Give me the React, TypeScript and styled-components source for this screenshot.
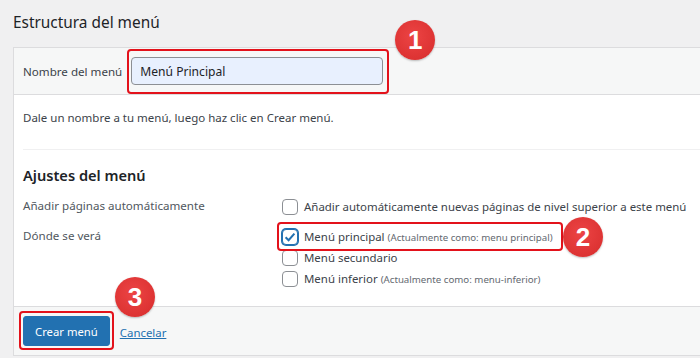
import React from 'react';
import styled, { createGlobalStyle } from 'styled-components';

const GlobalStyle = createGlobalStyle`
	html, body {
		margin: 0;
		padding: 0;
		background: #f0f0f1;
		overflow: hidden;
	}
	body {
		font-family: "Noto Sans", "Open Sans", sans-serif;
		font-size: 11.6px;
		color: #3c434a;
	}
`;

const Page = styled.div`
	width: 700px;
	height: 358px;
	padding-left: 13px;
	box-sizing: border-box;
	overflow: hidden;
`;

const Title = styled.h2`
	margin: 0 0 12px;
	padding-top: 11px;
	font-size: 15.4px;
	line-height: 24px;
	font-weight: 400;
	color: #1d2327;
`;

const Panel = styled.div`
	background: #fff;
	border: 1px solid #dcdcde;
	border-right: none;
`;

const Header = styled.div`
	display: flex;
	align-items: center;
	gap: 9px;
	height: 46px;
	padding-left: 9px;
	background: #f6f7f7;
	border-bottom: 1px solid #dcdcde;
`;

const Label = styled.span`
	font-size: 11.6px;
	color: #3c434a;
`;

const Marked = styled.div`
	position: relative;
	display: inline-flex;
`;

const Highlight = styled.span<{ $t: number; $r: number; $b: number; $l: number }>`
	position: absolute;
	top: ${(p) => p.$t}px;
	right: ${(p) => p.$r}px;
	bottom: ${(p) => p.$b}px;
	left: ${(p) => p.$l}px;
	border: 2.5px solid #e3121b;
	border-radius: 4px;
	pointer-events: none;
`;

const Badge = styled.span<{ $x: number; $y: number }>`
	position: absolute;
	left: ${(p) => p.$x}px;
	top: ${(p) => p.$y}px;
	width: 40px;
	height: 40px;
	border-radius: 50%;
	background: radial-gradient(circle at 45% 40%, #ec4444 0%, #dd3333 70%, #c92b2b 100%);
	box-shadow: 0 1px 2px rgba(0, 0, 0, 0.25);
	color: #fff;
	font-family: "Liberation Sans", Arial, sans-serif;
	font-weight: 700;
	font-size: 26px;
	line-height: 40px;
	text-align: center;
	z-index: 2;
`;

const NameInput = styled.input`
	width: 252px;
	height: 28px;
	box-sizing: border-box;
	padding: 0 8px;
	border: 1px solid #8c8f94;
	border-radius: 4px;
	background: #e8f0fe;
	font-family: inherit;
	font-size: 12.1px;
	color: #1d2327;
	outline: none;
`;

const Body = styled.div`
	padding-left: 9px;
`;

const Hint = styled.p`
	margin: 0;
	padding-top: 13px;
	font-size: 11.5px;
	line-height: 20px;
	color: #3c434a;
`;

const Divider = styled.div`
	height: 1px;
	margin-top: 21px;
	background: #f0f0f1;
`;

const SectionTitle = styled.h3`
	margin: 13px 0 9px;
	font-size: 14.6px;
	line-height: 24px;
	font-weight: 600;
	color: #1d2327;
`;

const SettingsGrid = styled.div`
	display: grid;
	grid-template-columns: 259px 1fr;
	row-gap: 9px;
	padding-bottom: 17px;
`;

const SettingLabel = styled.div`
	font-size: 11.6px;
	line-height: 20px;
	color: #50575e;
`;

const Options = styled.div`
	display: flex;
	flex-direction: column;
	align-items: flex-start;
`;

const Option = styled.label`
	display: inline-flex;
	align-items: center;
	gap: 6px;
	height: 21px;
	font-size: 11.45px;
	color: #3c434a;
	white-space: nowrap;
`;

const Box = styled.span<{ $checked?: boolean }>`
	display: inline-flex;
	align-items: center;
	justify-content: center;
	width: 16px;
	height: 16px;
	box-sizing: border-box;
	border: 1px solid ${(p) => (p.$checked ? '#2271b1' : '#8c8f94')};
	border-radius: 4px;
	background: #fff;
	box-shadow: ${(p) => (p.$checked ? '0 0 0 1px #2271b1' : 'none')};
	flex-shrink: 0;
`;

const Note = styled.span`
	font-size: 9.7px;
	color: #646970;
`;

const Footer = styled.div`
	display: flex;
	align-items: center;
	gap: 10px;
	padding: 9px 0 9px 9px;
	background: #f6f7f7;
	border-top: 1px solid #dcdcde;
`;

const PrimaryButton = styled.button`
	height: 30px;
	padding: 0 11px;
	border: 1px solid #2271b1;
	border-radius: 3px;
	background: #2271b1;
	color: #fff;
	font-family: inherit;
	font-size: 11.3px;
	cursor: pointer;
`;

const CancelLink = styled.a`
	font-size: 11.4px;
	color: #2271b1;
	text-decoration: underline;
	margin-top: 2px;
`;

const Check = ({ checked }: { checked?: boolean }) => (
	<Box $checked={checked}>
		{checked && (
			<svg width="14" height="14" viewBox="0 0 14 14">
				<path d="M2.6 7.2 L5.6 10.2 L11.4 3.6" fill="none" stroke="#2271b1" strokeWidth="2" />
			</svg>
		)}
	</Box>
);

const App = () => {
	return (
		<Page>
			<GlobalStyle />
			<Title>Estructura del menú</Title>
			<Panel>
				<Header>
					<Label>Nombre del menú</Label>
					<Marked>
						<NameInput defaultValue="Menú Principal" />
						<Highlight $t={-8} $r={-6} $b={-9} $l={-4} />
						<Badge $x={264} $y={-37}>1</Badge>
					</Marked>
				</Header>
				<Body>
					<Hint>Dale un nombre a tu menú, luego haz clic en Crear menú.</Hint>
					<Divider />
					<SectionTitle>Ajustes del menú</SectionTitle>
					<SettingsGrid>
						<SettingLabel>Añadir páginas automáticamente</SettingLabel>
						<Options>
							<Option>
								<Check />
								Añadir automáticamente nuevas páginas de nivel superior a este menú
							</Option>
						</Options>
						<SettingLabel>Dónde se verá</SettingLabel>
						<Options>
							<Marked>
								<Option>
									<Check checked />
									<span>
										Menú principal <Note>(Actualmente como: menu principal)</Note>
									</span>
								</Option>
								<Highlight $t={-4} $r={-10} $b={-4} $l={-5} />
								<Badge $x={281} $y={-9}>2</Badge>
							</Marked>
							<Option>
								<Check />
								Menú secundario
							</Option>
							<Option>
								<Check />
								<span>
									Menú inferior <Note>(Actualmente como: menu-inferior)</Note>
								</span>
							</Option>
						</Options>
					</SettingsGrid>
				</Body>
				<Footer>
					<Marked>
						<PrimaryButton>Crear menú</PrimaryButton>
						<Highlight $t={-5} $r={-4} $b={-4} $l={-4} />
						<Badge $x={92} $y={-39}>3</Badge>
					</Marked>
					<CancelLink href="#">Cancelar</CancelLink>
				</Footer>
			</Panel>
		</Page>
	);
};

export default App;
